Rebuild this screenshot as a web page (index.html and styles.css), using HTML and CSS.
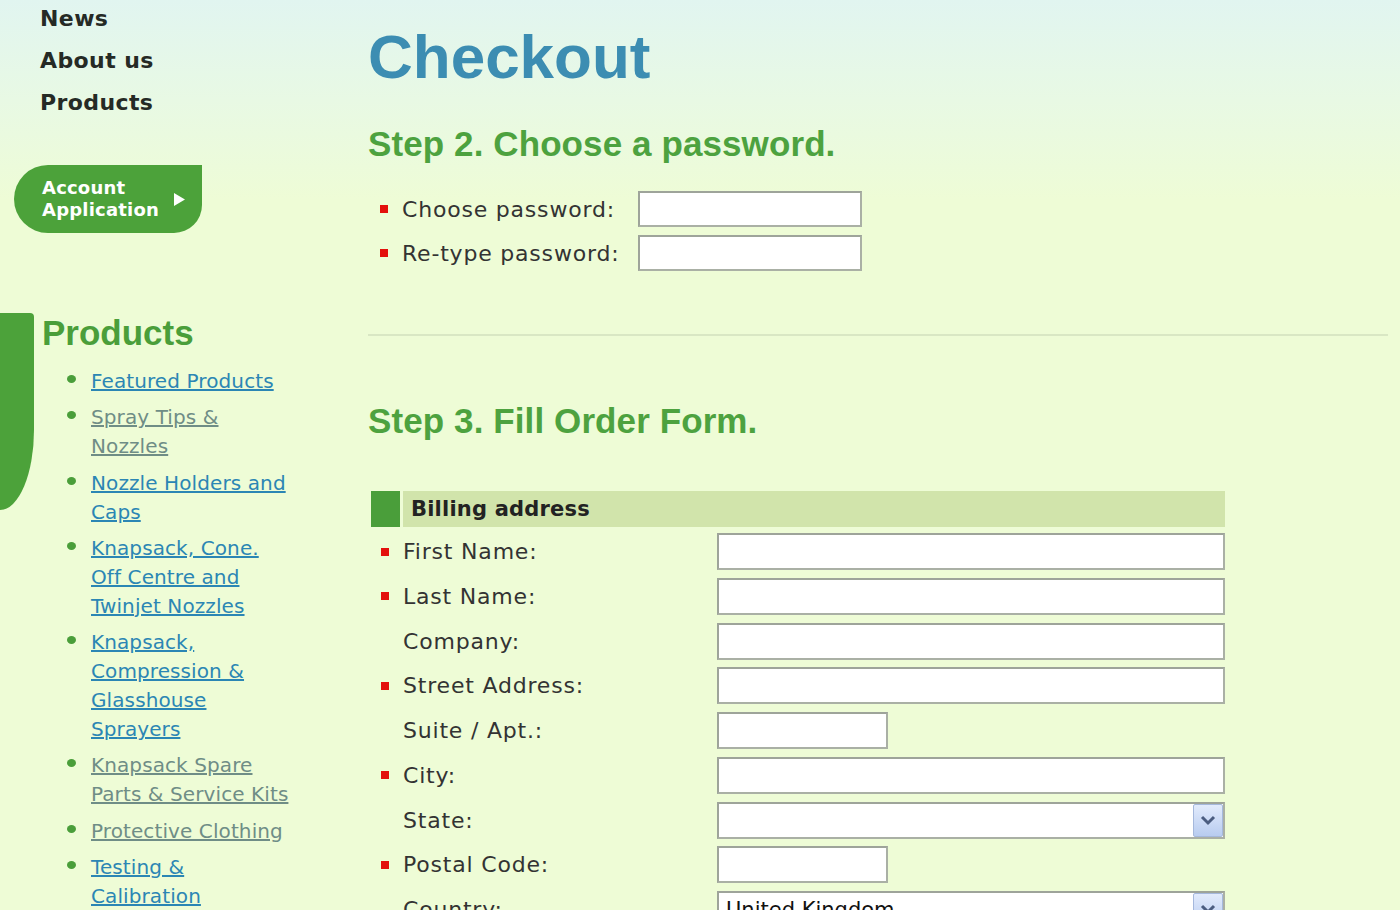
FILE: index.html
```html
<!DOCTYPE html>
<html lang="en">
<head>
    <meta charset="UTF-8">
    <meta name="viewport" content="width=device-width, initial-scale=1.0">
    <title>Checkout</title>
    <link rel="stylesheet" href="styles.css">
</head>
<body>
    <div class="page">
        <aside class="sidebar">
            <ul class="topnav">
                <li><a href="#">News</a></li>
                <li><a href="#">About us</a></li>
                <li><a href="#">Products</a></li>
            </ul>

            <a class="account-btn" href="#">
                <span class="account-text">Account<br>Application</span>
                <svg class="account-arrow" width="12" height="13" viewBox="0 0 12 13"><path d="M1 0 L12 6.5 L1 13 Z" fill="#fff"/></svg>
            </a>

            <div class="side-products">
                <h2>Products</h2>
                <ul class="product-links">
                    <li><a href="#">Featured Products</a></li>
                    <li><a class="visited" href="#">Spray Tips &amp; Nozzles</a></li>
                    <li><a href="#">Nozzle Holders and Caps</a></li>
                    <li><a href="#">Knapsack, Cone. Off Centre and Twinjet Nozzles</a></li>
                    <li><a href="#">Knapsack, Compression &amp; Glasshouse Sprayers</a></li>
                    <li><a class="visited" href="#">Knapsack Spare Parts &amp; Service Kits</a></li>
                    <li><a class="visited" href="#">Protective Clothing</a></li>
                    <li><a href="#">Testing &amp; Calibration</a></li>
                </ul>
            </div>
        </aside>

        <main class="content">
            <h1>Checkout</h1>

            <h2 class="step">Step 2. Choose a password.</h2>
            <div class="pw-form">
                <label class="field-label req">Choose password:</label>
                <input type="password" class="text-input">
                <label class="field-label req">Re-type password:</label>
                <input type="password" class="text-input">
            </div>

            <hr class="divider">

            <h2 class="step step3">Step 3. Fill Order Form.</h2>

            <div class="billing">
                <div class="section-head">
                    <span class="section-mark"></span>
                    <div class="section-title">Billing address</div>
                </div>
                <div class="form-grid">
                    <label class="field-label req">First Name:</label>
                    <input type="text" class="text-input">
                    <label class="field-label req">Last Name:</label>
                    <input type="text" class="text-input">
                    <label class="field-label">Company:</label>
                    <input type="text" class="text-input">
                    <label class="field-label req">Street Address:</label>
                    <input type="text" class="text-input">
                    <label class="field-label">Suite / Apt.:</label>
                    <input type="text" class="text-input short">
                    <label class="field-label req">City:</label>
                    <input type="text" class="text-input">
                    <label class="field-label">State:</label>
                    <div class="select">
                        <span class="select-value"></span>
                        <span class="select-btn"><svg width="30" height="33" viewBox="0 0 30 33"><path d="M9 13 L15 19 L21 13" fill="none" stroke="#4b5d80" stroke-width="3"/></svg></span>
                    </div>
                    <label class="field-label req">Postal Code:</label>
                    <input type="text" class="text-input short">
                    <label class="field-label">Country:</label>
                    <div class="select">
                        <span class="select-value">United Kingdom</span>
                        <span class="select-btn"><svg width="30" height="33" viewBox="0 0 30 33"><path d="M9 13 L15 19 L21 13" fill="none" stroke="#4b5d80" stroke-width="3"/></svg></span>
                    </div>
                </div>
            </div>
        </main>
    </div>
</body>
</html>
```

FILE: styles.css
```css
body {
    margin: 0;
    height: 910px;
    overflow: hidden;
    font-family: "DejaVu Sans", Verdana, sans-serif;
    color: #2d2d2d;
    background-color: #eefcd6;
    background-image: linear-gradient(#e1f5f0 0px, #e8f9e4 100px, #eefcd6 200px);
    background-size: 100% 220px;
    background-repeat: no-repeat;
}
.page {
    display: flex;
}
.sidebar {
    width: 368px;
    flex-shrink: 0;
}
.topnav {
    list-style: none;
    margin: -2px 0 0;
    padding: 0 0 0 40px;
    font-size: 22px;
    font-weight: bold;
    line-height: 42px;
    letter-spacing: 0.4px;
}
.topnav a {
    color: #252a25;
    text-decoration: none;
}
.account-btn {
    display: flex;
    align-items: center;
    box-sizing: border-box;
    width: 188px;
    height: 68px;
    margin: 41px 0 0 14px;
    padding-left: 28px;
    background: #4ca23a;
    border-radius: 34px 0 28px 34px;
    color: #fff;
    text-decoration: none;
    font-size: 18px;
    font-weight: bold;
    line-height: 22px;
    letter-spacing: 0.2px;
}
.account-text {
    width: 131px;
}
.side-products {
    position: relative;
    margin-top: 80px;
    padding-left: 42px;
}
.side-products::before {
    content: "";
    position: absolute;
    left: 0;
    top: 0;
    width: 34px;
    height: 197px;
    background: #4ca23a;
    border-radius: 0 4px 34px 0 / 0 4px 80px 0;
}
.side-products h2 {
    margin: 2px 0 0;
    font-family: "Liberation Sans", Arial, sans-serif;
    font-size: 35px;
    line-height: 40px;
    color: #4a9e3a;
}
.product-links {
    list-style: none;
    width: 200px;
    margin: 14px 0 0;
    padding: 0 0 0 49px;
    font-size: 20px;
    line-height: 29px;
    letter-spacing: 0.1px;
}
.product-links li {
    position: relative;
    margin-bottom: 7.3px;
}
.product-links li::before {
    content: "";
    position: absolute;
    left: -24px;
    top: 8px;
    width: 9px;
    height: 8px;
    border-radius: 50%;
    background: #4a9e3a;
}
.product-links a {
    color: #2b86b4;
}
.product-links a.visited {
    color: #6f8d86;
}
.content {
    flex: 1;
    padding-right: 12px;
}
.content h1 {
    margin: 26px 0 0;
    font-family: "Liberation Sans", Arial, sans-serif;
    font-size: 62px;
    line-height: 62px;
    color: #3c8db2;
}
.step {
    margin: 36px 0 0;
    font-family: "Liberation Sans", Arial, sans-serif;
    font-size: 35px;
    line-height: 40px;
    letter-spacing: 0.1px;
    color: #4da23f;
}
.step3 {
    margin-top: 65px;
}
.pw-form {
    display: grid;
    grid-template-columns: 270px 224px;
    grid-auto-rows: 36px;
    row-gap: 8px;
    margin-top: 27px;
}
.field-label {
    display: flex;
    align-items: center;
    padding-left: 12px;
    font-size: 22px;
    letter-spacing: 0.8px;
    color: #333;
}
.field-label::before {
    content: "";
    flex-shrink: 0;
    width: 8px;
    height: 8px;
    margin-right: 14px;
}
.field-label.req::before {
    background: #e3100c;
}
.text-input {
    box-sizing: border-box;
    width: 100%;
    height: 100%;
    margin: 0;
    padding: 0 6px;
    border: 2px solid #aab0a5;
    border-top-color: #9ea49a;
    border-left-color: #9ea49a;
    background: #fff;
    font: inherit;
}
.text-input.short {
    width: 171px;
}
.divider {
    height: 2px;
    margin: 63px 0 0;
    border: 0;
    background: #d9e7c4;
}
.billing {
    width: 854px;
    margin: 50px 0 0 3px;
}
.section-head {
    display: flex;
    gap: 3px;
    height: 36px;
}
.section-mark {
    width: 29px;
    background: #4a9e3a;
}
.section-title {
    flex: 1;
    padding-left: 8px;
    background: #d1e4ab;
    font-size: 21px;
    font-weight: bold;
    line-height: 36px;
    letter-spacing: 0.2px;
    color: #222;
}
.form-grid {
    display: grid;
    grid-template-columns: 346px 508px;
    grid-auto-rows: 37px;
    row-gap: 7.75px;
    margin-top: 6px;
}
.form-grid .field-label {
    padding-left: 10px;
}
.select {
    display: flex;
    align-items: center;
    box-sizing: border-box;
    height: 37px;
    padding-left: 7px;
    border: 2px solid #aab0a5;
    border-top-color: #9ea49a;
    border-left-color: #9ea49a;
    background: #fff;
    font-size: 21px;
    color: #111;
}
.select-value {
    flex: 1;
}
.select-btn {
    box-sizing: border-box;
    width: 30px;
    height: 33px;
    border: 1px solid #a5b8dc;
    border-radius: 2px;
    background: linear-gradient(#e2ebfc, #b8ccf0);
}
.select-btn svg {
    display: block;
    margin: -1px;
}
```
